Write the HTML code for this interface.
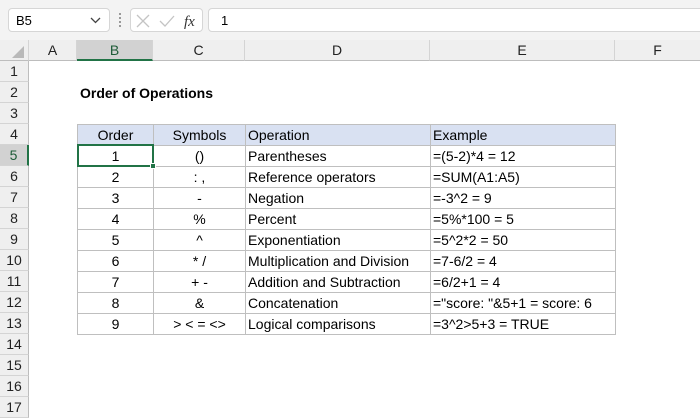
<!DOCTYPE html>
<html><head><meta charset="utf-8"><style>
*{margin:0;padding:0;box-sizing:border-box}
body{width:700px;height:400px;overflow:hidden;background:#fff;font-family:"Liberation Sans",Calibri,sans-serif;font-size:14px;color:#000;position:relative}
.tb{position:absolute;left:0;top:0;width:700px;height:40px;background:#f3f3f3}
.nb{position:absolute;left:8px;top:8px;width:102px;height:24px;background:#fff;border:1px solid #d6d6d6;border-radius:4px;font-size:13px;padding:4px 0 0 7px}
.fx{position:absolute;left:130px;top:8px;width:73px;height:24px;background:#fff;border:1px solid #d6d6d6;border-radius:4px}
.fi{position:absolute;left:208px;top:8px;width:500px;height:24px;background:#fff;border:1px solid #d6d6d6;border-radius:4px;font-size:13px;padding:4px 0 0 12px}
.ch{position:absolute;top:40px;height:21px;background:#efefef;border-right:1px solid #d4d4d4;border-bottom:1px solid #bdbdbd;text-align:center;font-size:14px;line-height:21px;color:#222}
.rh{position:absolute;left:0;width:29px;height:21px;background:#efefef;border-bottom:1px solid #d4d4d4;border-right:1px solid #bdbdbd;text-align:center;font-size:14px;line-height:21px;color:#222}
table{position:absolute;left:77px;top:124px;border-collapse:collapse}
td{border:1px solid #bfbfbf;height:21px;padding:0 2px;font-size:14px;line-height:19px;white-space:nowrap}
td.c{text-align:center}
tr.h td{background:#d9e1f2}
</style></head><body>
<div class="tb"></div>
<div class="nb">B5<svg style="position:absolute;right:8px;top:8px" width="11" height="7"><path d="M1 1l4.5 4.5L10 1" stroke="#444" fill="none" stroke-width="1.3"/></svg></div>
<div style="position:absolute;left:119px;top:13px;width:2px;height:14px;border-left:2px dotted #999"></div>
<div class="fx"><svg width="73" height="24"><path d="M6 6l12 12M18 6L6 18" stroke="#c4c4c4" stroke-width="1.3"/><path d="M29 12l5 5 9-10" stroke="#c4c4c4" stroke-width="1.3" fill="none"/><text x="53" y="17" font-family="Liberation Serif,serif" font-style="italic" font-size="15" fill="#333">fx</text></svg></div>
<div class="fi">1</div>
<div class="ch" style="left:0;width:29px"><svg width="29" height="21"><path d="M24 6v12H12z" fill="#b9b9b9"/></svg></div>
<div class="ch" style="left:29px;width:48px">A</div>
<div class="ch" style="left:77px;width:76px;background:#d2d2d2;border-bottom:2px solid #217346;color:#1e5c38">B</div>
<div class="ch" style="left:153px;width:92px">C</div>
<div class="ch" style="left:245px;width:185px">D</div>
<div class="ch" style="left:430px;width:185px">E</div>
<div class="ch" style="left:615px;width:85px;border-right:none">F</div>
<div class="rh" style="top:61px">1</div>
<div class="rh" style="top:82px">2</div>
<div class="rh" style="top:103px">3</div>
<div class="rh" style="top:124px">4</div>
<div class="rh" style="top:145px;background:#d2d2d2;border-right:2px solid #217346;color:#1e5c38">5</div>
<div class="rh" style="top:166px">6</div>
<div class="rh" style="top:187px">7</div>
<div class="rh" style="top:208px">8</div>
<div class="rh" style="top:229px">9</div>
<div class="rh" style="top:250px">10</div>
<div class="rh" style="top:271px">11</div>
<div class="rh" style="top:292px">12</div>
<div class="rh" style="top:313px">13</div>
<div class="rh" style="top:334px">14</div>
<div class="rh" style="top:355px">15</div>
<div class="rh" style="top:376px">16</div>
<div class="rh" style="top:397px">17</div>
<div style="position:absolute;left:80px;top:84px;font-weight:bold;font-size:14px;line-height:19px">Order of Operations</div>
<table>
<colgroup><col style="width:76px"><col style="width:92px"><col style="width:185px"><col style="width:185px"></colgroup>
<tr class="h"><td class="c">Order</td><td class="c">Symbols</td><td>Operation</td><td>Example</td></tr>
<tr><td class="c">1</td><td class="c">()</td><td>Parentheses</td><td>=(5-2)*4 = 12</td></tr>
<tr><td class="c">2</td><td class="c">: ,</td><td>Reference operators</td><td>=SUM(A1:A5)</td></tr>
<tr><td class="c">3</td><td class="c">-</td><td>Negation</td><td>=-3^2 = 9</td></tr>
<tr><td class="c">4</td><td class="c">%</td><td>Percent</td><td>=5%*100 = 5</td></tr>
<tr><td class="c">5</td><td class="c">^</td><td>Exponentiation</td><td>=5^2*2 = 50</td></tr>
<tr><td class="c">6</td><td class="c">* /</td><td>Multiplication and Division</td><td>=7-6/2 = 4</td></tr>
<tr><td class="c">7</td><td class="c">+ -</td><td>Addition and Subtraction</td><td>=6/2+1 = 4</td></tr>
<tr><td class="c">8</td><td class="c">&amp;</td><td>Concatenation</td><td>="score: "&amp;5+1 = score: 6</td></tr>
<tr><td class="c">9</td><td class="c">&gt; &lt; = &lt;&gt;</td><td>Logical comparisons</td><td>=3^2&gt;5+3 = TRUE</td></tr>
</table>
<div style="position:absolute;left:77px;top:144px;width:77px;height:23px;border:2px solid #217346"></div>
<div style="position:absolute;left:150px;top:163px;width:6px;height:6px;background:#217346;border:1px solid #fff"></div>
</body></html>
